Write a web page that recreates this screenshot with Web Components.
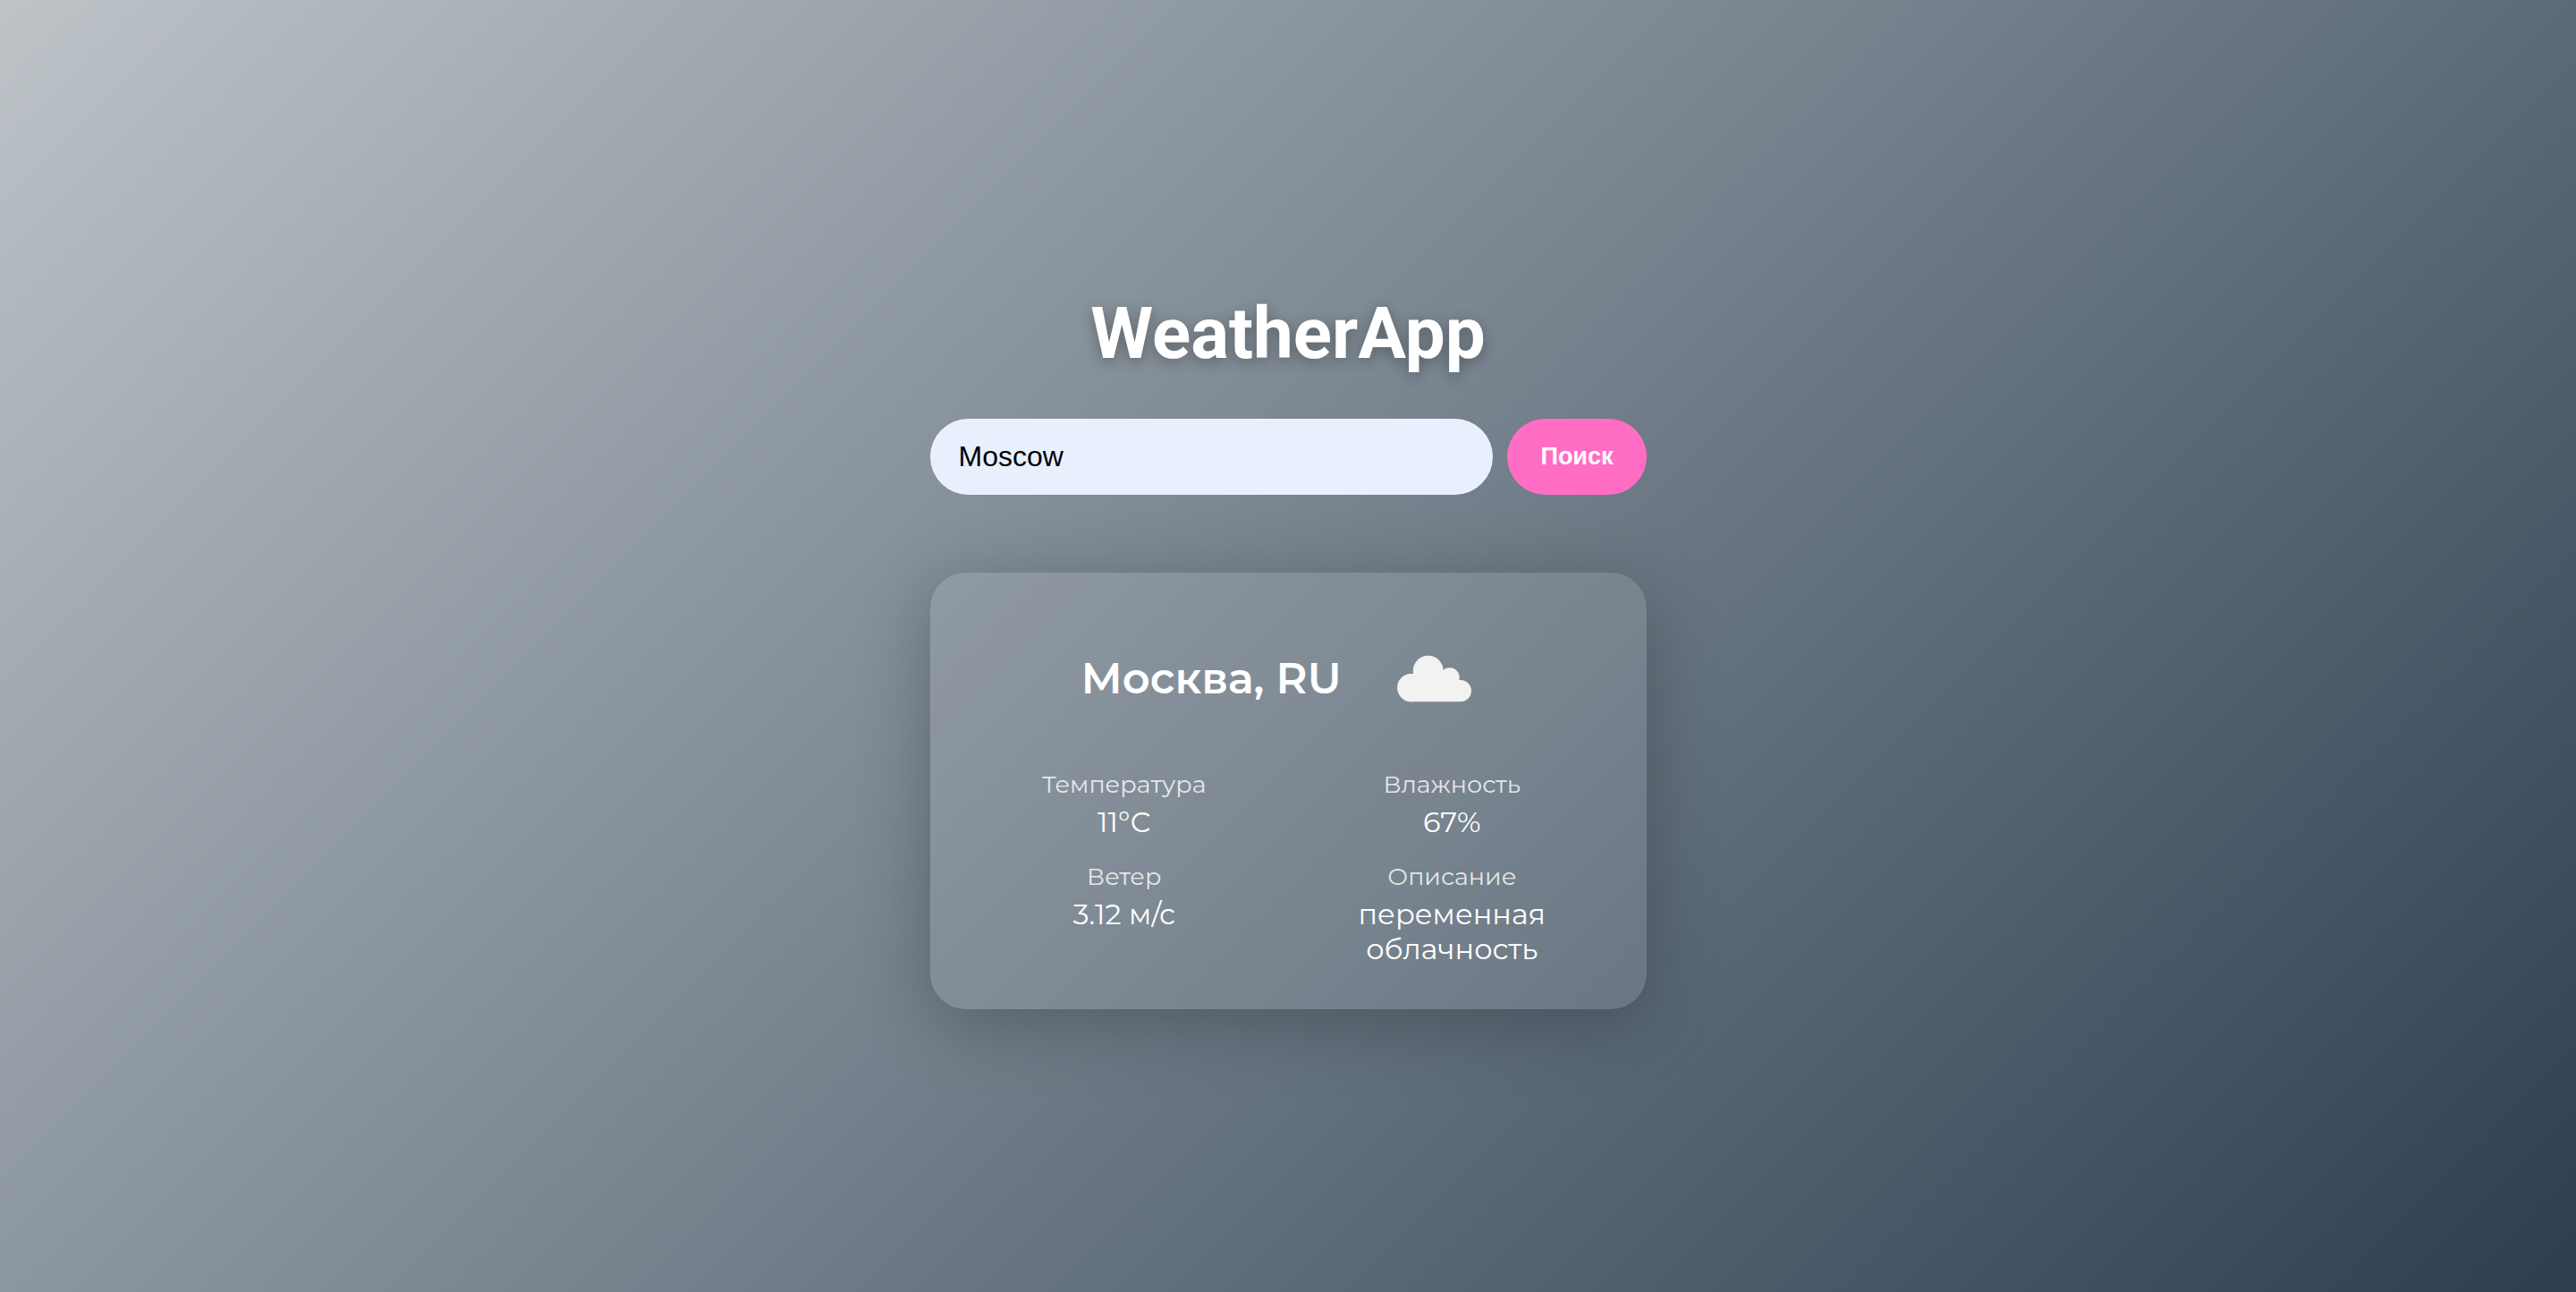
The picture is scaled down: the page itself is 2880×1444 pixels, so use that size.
<!DOCTYPE html>
<html lang="ru">
<head>
<meta charset="utf-8">
<meta name="viewport" content="width=device-width, initial-scale=1">
<title>WeatherApp</title>
<style>
html, body { margin: 0; }
body { font-family: Montserrat, Inter, sans-serif; color: #fff; }
</style>
</head>
<body>
<weather-app>
  <search-bar slot="search" city="Moscow"></search-bar>
  <weather-card>
    <span slot="city">Москва, RU</span>
    <cloud-icon slot="icon"></cloud-icon>
    <weather-fact label="Температура">11°C</weather-fact>
    <weather-fact label="Влажность">67%</weather-fact>
    <weather-fact label="Ветер">3.12 м/с</weather-fact>
    <weather-fact label="Описание">переменная облачность</weather-fact>
  </weather-card>
</weather-app>
<script>
class BaseElement extends HTMLElement {
  constructor() {
    super();
    this.attachShadow({ mode: 'open' }).innerHTML = this.constructor.markup;
  }
}

customElements.define('weather-app', class extends BaseElement {
  static markup = `
    <style>
      :host { box-sizing: border-box; display: flex; align-items: center; justify-content: center;
        min-height: 100vh; padding: 32px; background: linear-gradient(135deg, #bdc3c7, #2c3e50); }
      main { width: 100%; max-width: 801px; }
      h1 { margin: 0 0 38px; font: 700 80px/114px Roboto, sans-serif; text-align: center;
        text-shadow: 0 4px 16px rgba(0, 0, 0, .3); }
      slot[name=search] { display: block; margin-bottom: 87px; }
    </style>
    <main>
      <h1>WeatherApp</h1>
      <slot name="search"></slot>
      <slot></slot>
    </main>`;
});

customElements.define('search-bar', class extends BaseElement {
  static markup = `
    <style>
      :host { display: block; }
      form { display: flex; gap: 16px; }
      input, button { box-sizing: border-box; height: 85px; margin: 0; border: 0; border-radius: 50px; }
      input { flex: 1; min-width: 0; padding: 0 32px; background: #e8f0fe; color: #000; outline: 0;
        font: 32px "Liberation Sans", Arial, sans-serif; }
      button { padding: 0 37px; background: #ff6ec4; color: #fff; cursor: pointer;
        font: 700 27px "Liberation Sans", Arial, sans-serif; }
    </style>
    <form>
      <input type="text" name="city" aria-label="Город">
      <button type="submit">Поиск</button>
    </form>`;
  connectedCallback() {
    this.shadowRoot.querySelector('input').value = this.getAttribute('city') || '';
    this.shadowRoot.querySelector('form').addEventListener('submit', e => e.preventDefault());
  }
});

customElements.define('weather-card', class extends BaseElement {
  static markup = `
    <style>
      :host { display: block; box-sizing: border-box; padding: 48px; border-radius: 40px;
        background: rgba(255, 255, 255, .1); box-shadow: 0 16px 80px rgba(0, 0, 0, .25);
        text-align: center; }
      header { display: flex; align-items: center; justify-content: center; gap: 40px;
        height: 140px; margin-bottom: 32px; }
      h2 { margin: 0; font-size: 48px; line-height: 58px; font-weight: 600; }
      .facts { display: grid; grid-template-columns: 1fr 1fr; gap: 25px 28px; }
    </style>
    <header><h2><slot name="city"></slot></h2><slot name="icon"></slot></header>
    <div class="facts"><slot></slot></div>`;
});

customElements.define('cloud-icon', class extends BaseElement {
  static markup = `
    <style>
      :host { display: block; width: 132px; height: 130px; }
      svg { display: block; }
    </style>
    <svg width="132" height="130" viewBox="1 0 132 130" fill="#f2f2f0" aria-hidden="true">
      <path d="M39 91.3a15.7 15.7 0 0 1 0-31.4L93.8 66.9a12.2 12.2 0 0 1 0 24.4z"/>
      <circle cx="57.7" cy="56.7" r="17"/>
      <circle cx="81.7" cy="64.3" r="11"/>
      <circle cx="39" cy="75.6" r="15.7"/>
    </svg>`;
});

customElements.define('weather-fact', class extends BaseElement {
  static markup = `
    <style>
      :host { display: block; min-width: 0; padding: 0 40px; }
      .label { margin-bottom: 6px; font-size: 27px; line-height: 33px; opacity: .8; }
      .value { font-size: 32px; line-height: 39px; }
    </style>
    <div class="label"></div>
    <div class="value"><slot></slot></div>`;
  connectedCallback() {
    this.shadowRoot.querySelector('.label').textContent = this.getAttribute('label');
  }
});
</script>
</body>
</html>
